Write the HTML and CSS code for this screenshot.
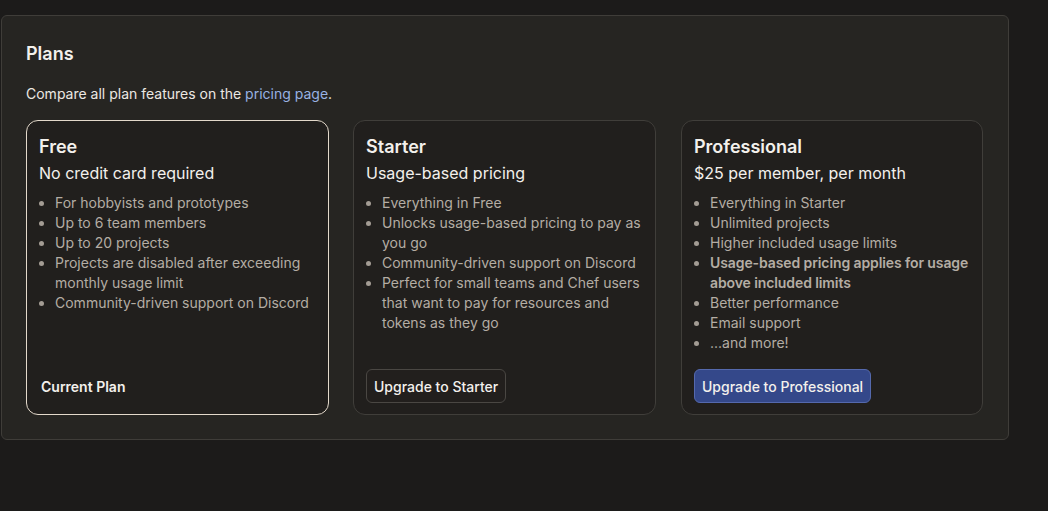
FILE: index.html
```html
<!DOCTYPE html>
<html lang="en">
<head>
<meta charset="utf-8">
<title>Plans</title>
<link rel="stylesheet" href="styles.css">
</head>
<body>
<section class="panel">
  <h2 class="panel-title">Plans</h2>
  <p class="panel-desc">Compare all plan features on the <a href="#" class="link">pricing page</a>.</p>
  <div class="plans">
    <div class="plan plan-current">
      <h3 class="plan-name">Free</h3>
      <div class="plan-price">No credit card required</div>
      <ul class="features">
        <li>For hobbyists and prototypes</li>
        <li>Up to 6 team members</li>
        <li>Up to 20 projects</li>
        <li>Projects are disabled after exceeding monthly usage limit</li>
        <li>Community-driven support on Discord</li>
      </ul>
      <div class="plan-footer"><span class="current-label">Current Plan</span></div>
    </div>
    <div class="plan">
      <h3 class="plan-name">Starter</h3>
      <div class="plan-price">Usage-based pricing</div>
      <ul class="features">
        <li>Everything in Free</li>
        <li>Unlocks usage-based pricing to pay as you go</li>
        <li>Community-driven support on Discord</li>
        <li>Perfect for small teams and Chef users that want to pay for resources and tokens as they go</li>
      </ul>
      <div class="plan-footer"><button class="btn">Upgrade to Starter</button></div>
    </div>
    <div class="plan">
      <h3 class="plan-name">Professional</h3>
      <div class="plan-price">$25 per member, per month</div>
      <ul class="features">
        <li>Everything in Starter</li>
        <li>Unlimited projects</li>
        <li>Higher included usage limits</li>
        <li class="strong">Usage-based pricing applies for usage above included limits</li>
        <li>Better performance</li>
        <li>Email support</li>
        <li>...and more!</li>
      </ul>
      <div class="plan-footer"><button class="btn btn-primary">Upgrade to Professional</button></div>
    </div>
  </div>
</section>
</body>
</html>
```

FILE: styles.css
```css
* { box-sizing: border-box; }
html, body {
  margin: 0;
  background: #1c1b1a;
}
body {
  padding: 15px 0 0 1px;
  font-family: Inter, "Noto Sans", sans-serif;
  color: #f3f0ec;
}
.panel {
  width: 1008px;
  border: 1px solid #3f3d39;
  border-radius: 6px;
  background: #262522;
  padding: 24px;
}
.panel-title {
  margin: 0;
  font-size: 18px;
  line-height: 28px;
  font-weight: 600;
}
.panel-desc {
  margin: 16px 0 0;
  font-size: 14px;
  line-height: 20px;
  color: #ece8e2;
}
.link {
  color: #98b2e3;
  text-decoration: none;
}
.plans {
  margin-top: 16px;
  display: grid;
  grid-template-columns: 303px 303px 303px;
  column-gap: 24px;
}
.plan {
  display: flex;
  flex-direction: column;
  background: #211f1d;
  border: 1px solid #403e3a;
  border-radius: 12px;
  padding: 12px 11px 11px 12px;
}
.plan:last-child {
  margin-left: 1px;
}
.plan-current {
  border-color: #e3d9cb;
}
.plan-name {
  margin: 0;
  font-size: 18px;
  line-height: 28px;
  font-weight: 600;
}
.plan-price {
  font-size: 16px;
  line-height: 24px;
}
.features {
  margin: 8px 0 0;
  padding-left: 16px;
  font-size: 14px;
  line-height: 20px;
  color: #b4ada4;
}
.features li::marker {
  color: #a39c94;
}
.features .strong {
  font-weight: 600;
  letter-spacing: -0.1px;
}
.plan-footer {
  margin-top: auto;
  padding-top: 16px;
  display: flex;
  align-items: center;
  min-height: 50px;
}
.current-label {
  padding-left: 2px;
  font-size: 14px;
  font-weight: 600;
}
.btn {
  height: 34px;
  padding: 0 7px;
  font-family: inherit;
  font-size: 14px;
  font-weight: 500;
  color: #f3f0ec;
  background: #221f1d;
  border: 1px solid #4a4743;
  border-radius: 6px;
}
.btn-primary {
  background: #34488a;
  border-color: #5569ad;
}
```
